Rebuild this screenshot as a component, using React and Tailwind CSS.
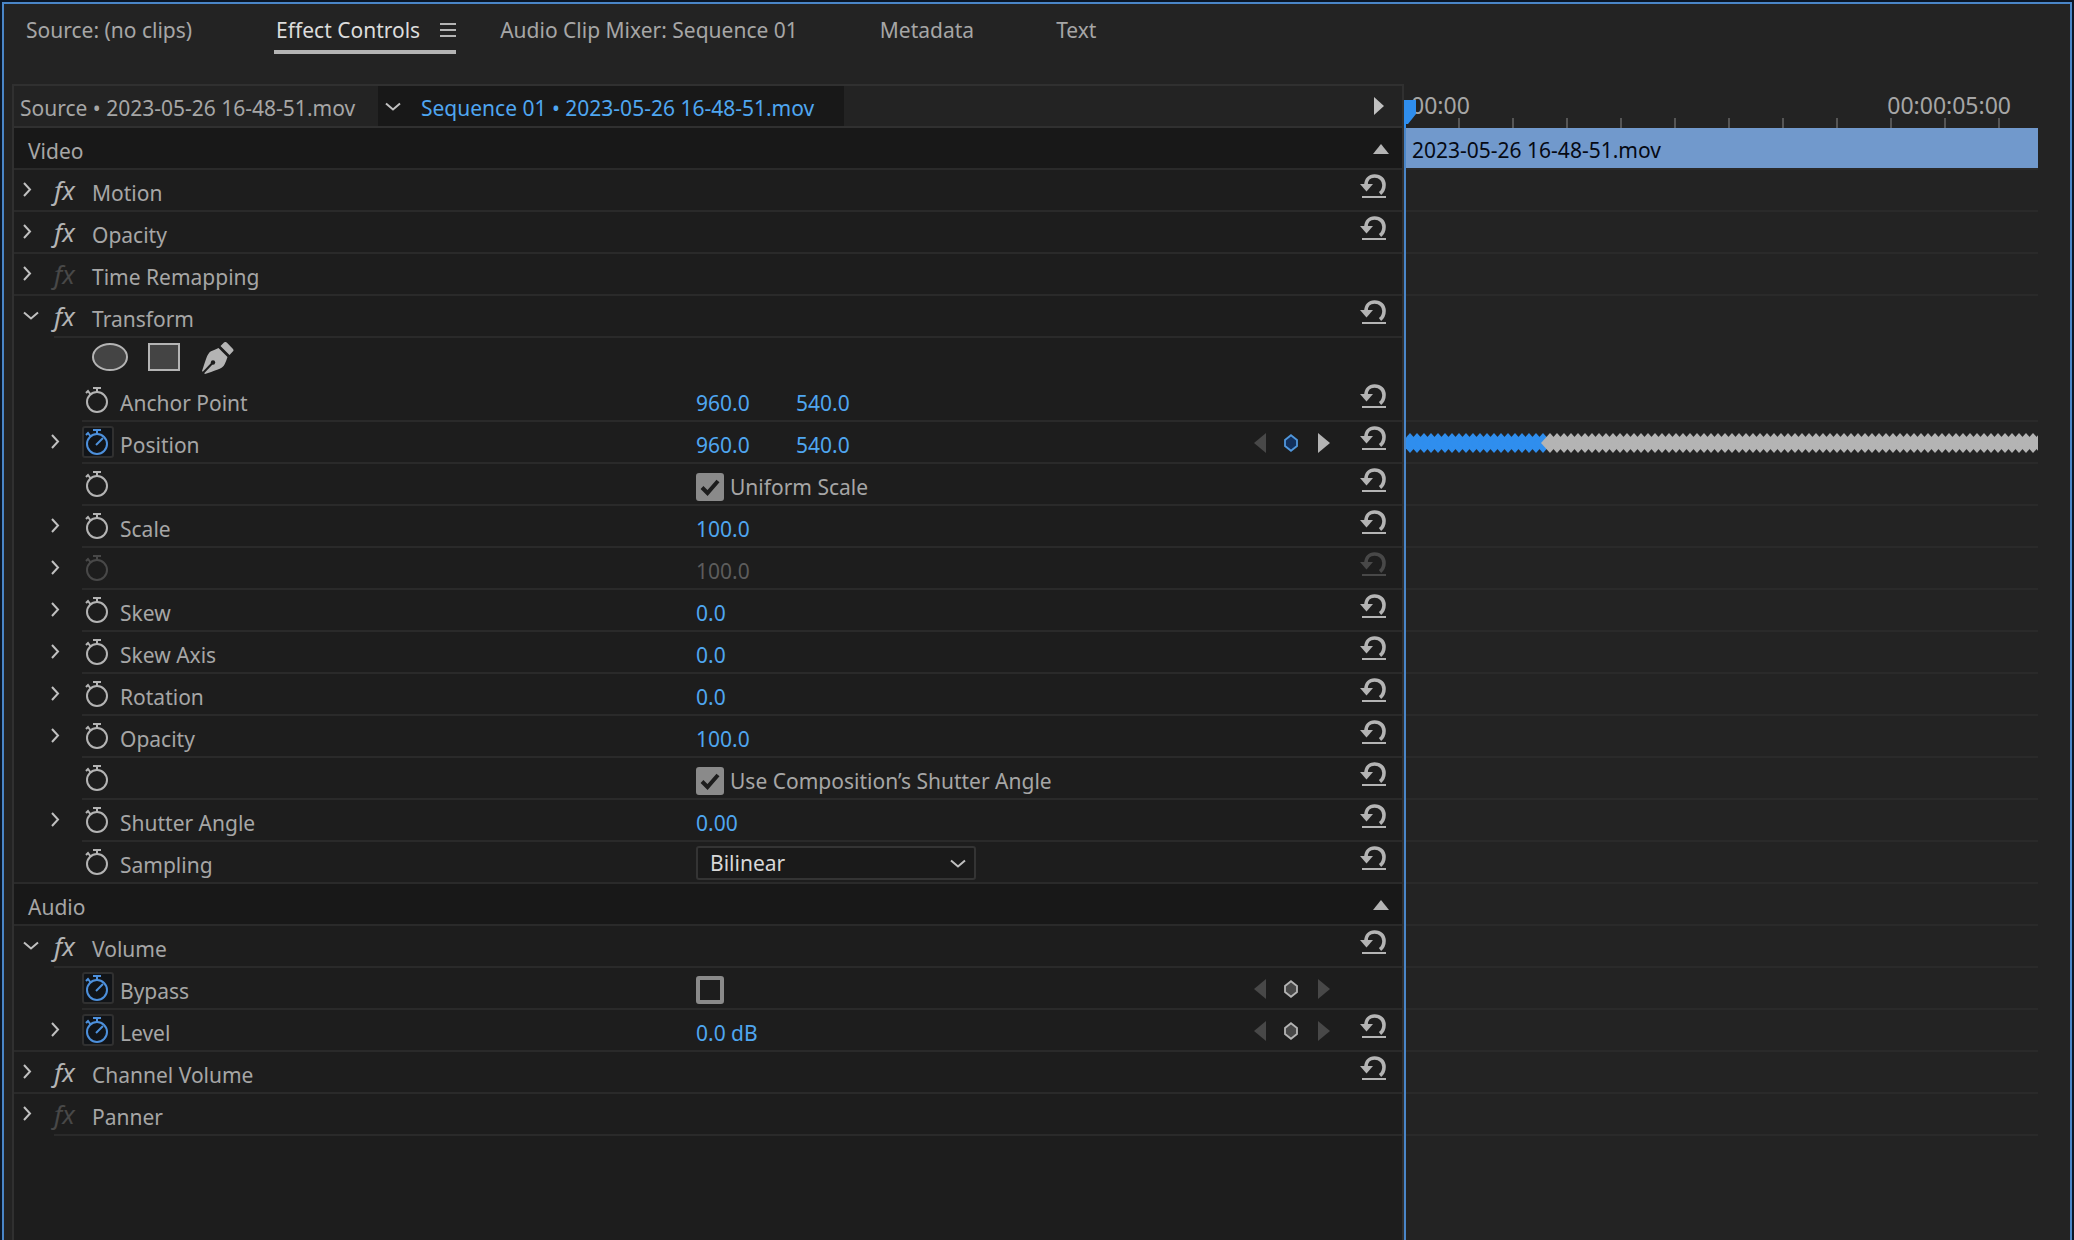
import React, { useState } from 'react';

const rows = [
  { id: 'video', kind: 'section', label: 'Video' },
  { id: 'motion', kind: 'effect', label: 'Motion', reset: true },
  { id: 'opacity-fx', kind: 'effect', label: 'Opacity', reset: true },
  { id: 'time', kind: 'effect', label: 'Time Remapping', dim: true },
  { id: 'transform', kind: 'effect', label: 'Transform', open: true, inset: true, reset: true, noTrackLine: true },
  { id: 'masks', kind: 'masks', noTrackLine: true },
  { id: 'anchor', kind: 'prop', label: 'Anchor Point', values: ['960.0', '540.0'], reset: true },
  { id: 'position', kind: 'prop', label: 'Position', arrow: true, values: ['960.0', '540.0'], animated: true, nav: 'active', reset: true, keyframes: true },
  { id: 'uniform', kind: 'prop', check: 'Uniform Scale', checked: true, reset: true },
  { id: 'scale', kind: 'prop', label: 'Scale', arrow: true, values: ['100.0'], reset: true },
  { id: 'scale-w', kind: 'prop', arrow: true, values: ['100.0'], disabled: true, reset: true },
  { id: 'skew', kind: 'prop', label: 'Skew', arrow: true, values: ['0.0'], reset: true },
  { id: 'skew-axis', kind: 'prop', label: 'Skew Axis', arrow: true, values: ['0.0'], reset: true },
  { id: 'rotation', kind: 'prop', label: 'Rotation', arrow: true, values: ['0.0'], reset: true },
  { id: 'opacity', kind: 'prop', label: 'Opacity', arrow: true, values: ['100.0'], reset: true },
  { id: 'use-comp', kind: 'prop', check: 'Use Composition’s Shutter Angle', checked: true, reset: true },
  { id: 'shutter', kind: 'prop', label: 'Shutter Angle', arrow: true, values: ['0.00'], reset: true },
  { id: 'sampling', kind: 'prop', label: 'Sampling', select: true, reset: true, last: true },
  { id: 'audio', kind: 'section', label: 'Audio' },
  { id: 'volume', kind: 'effect', label: 'Volume', open: true, inset: true, reset: true },
  { id: 'bypass', kind: 'prop', label: 'Bypass', check: '', checked: false, animated: true, nav: 'idle' },
  { id: 'level', kind: 'prop', label: 'Level', arrow: true, values: ['0.0 dB'], animated: true, nav: 'idle', reset: true, last: true },
  { id: 'channel', kind: 'effect', label: 'Channel Volume', reset: true },
  { id: 'panner', kind: 'effect', label: 'Panner', dim: true, inset: true },
];

function ChevronRight() {
  return (
    <svg width="9" height="15" viewBox="0 0 9 15" fill="none" stroke="#c0c0c0" strokeWidth="2">
      <path d="M1 1 L7 7.5 L1 14" />
    </svg>
  );
}

function ChevronDown() {
  return (
    <svg width="16" height="9" viewBox="0 0 16 9" fill="none" stroke="#c0c0c0" strokeWidth="2">
      <path d="M1 1.5 L8 7.5 L15 1.5" />
    </svg>
  );
}

function Stopwatch({ on, disabled }) {
  const color = on ? '#4d90dc' : disabled ? '#484848' : '#b4b4b4';
  return (
    <svg width="24" height="27" viewBox="0 0 24 27" fill="none" stroke={color} strokeWidth="2">
      <circle cx="12" cy="15" r="10" />
      <path d="M8 1 H16 M12 1 V5" />
      <path d="M1 6 L3 4 L6 8" />
      {on && <path d="M11 16 L18 9" />}
    </svg>
  );
}

function ResetIcon({ disabled }) {
  const color = disabled ? '#484848' : '#b4b4b4';
  return (
    <svg width="26" height="24" viewBox="0 0 26 24">
      <path d="M6 11 C6 5.500 9.500 2 14.500 2 C20.500 2 24 6 24 11 C24 15 22.500 17.500 20 19.500" fill="none" stroke={color} strokeWidth="3.600" />
      <path d="M0 10 H13 L6.500 17.500 Z" fill={color} />
      <path d="M2 22 H26 V24 H2 Z" fill={color} />
    </svg>
  );
}

function ResetButton({ name, disabled }) {
  return (
    <button aria-label={'Reset ' + name} disabled={disabled} className="mt-1 h-6 w-[26px]">
      <ResetIcon disabled={disabled} />
    </button>
  );
}

function KeyframeNav({ mode }) {
  const active = mode === 'active';
  return (
    <div className="mt-[10px] flex h-[22px] items-center gap-[18px]">
      <button aria-label="Previous keyframe" disabled>
        <svg width="12" height="20" viewBox="0 0 12 20">
          <path d="M12 0 V20 L0 10 Z" fill="#484848" />
        </svg>
      </button>
      <button aria-label="Toggle keyframe">
        <svg width="14" height="18" viewBox="0 0 14 18">
          <path d="M7 1.200 L13 6 V12 L7 16.800 L1 12 V6 Z" fill={active ? '#12305c' : '#484848'} stroke={active ? '#5097dd' : '#b4b4b4'} strokeWidth="1.800" />
        </svg>
      </button>
      <button aria-label="Next keyframe" disabled={!active} className="ml-0.5">
        <svg width="12" height="20" viewBox="0 0 12 20">
          <path d="M0 0 V20 L12 10 Z" fill={active ? '#b4b4b4' : '#484848'} />
        </svg>
      </button>
    </div>
  );
}

function CheckField({ id, label, initial }) {
  const [checked, setChecked] = useState(initial);
  return (
    <div className="mt-2 flex items-center gap-[6px]">
      <span className="grid size-7 shrink-0 place-items-center">
        <input
          id={id}
          type="checkbox"
          aria-label={label || 'Bypass'}
          checked={checked}
          onChange={(e) => setChecked(e.target.checked)}
          className="col-start-1 row-start-1 size-7 appearance-none rounded-[3px] border-4 border-[#8a8a8a] checked:bg-[#8a8a8a]"
        />
        {checked && (
          <svg width="20" height="17" viewBox="0 0 20 17" fill="none" stroke="#1d1d1d" strokeWidth="4" className="pointer-events-none col-start-1 row-start-1">
            <path d="M2 8.500 L7.500 14 L18 2" />
          </svg>
        )}
      </span>
      {label && <label htmlFor={id}>{label}</label>}
    </div>
  );
}

function SectionRow({ row }) {
  return (
    <div className="flex h-[42px] items-start justify-between border-b-2 border-[#2a2a2a] bg-[#181818] pr-[13px] pl-[14px]">
      <h2 className="pt-2">{row.label}</h2>
      <button aria-label={'Collapse ' + row.label} className="mt-4">
        <svg width="16" height="10" viewBox="0 0 16 10">
          <path d="M8 0 L16 10 H0 Z" fill="#b4b4b4" />
        </svg>
      </button>
    </div>
  );
}

function EffectRow({ row }) {
  return (
    <div className={'flex h-[42px]' + (row.inset ? '' : ' border-b-2 border-[#2a2a2a]')}>
      <button aria-label={'Toggle ' + row.label} className="mt-[7px] flex h-6 w-10 items-center pl-[9px]">
        {row.open ? <ChevronDown /> : <ChevronRight />}
      </button>
      <div className={'flex flex-1 items-start pr-4' + (row.inset ? ' border-b-2 border-[#2a2a2a]' : '')}>
        <button aria-label={row.label + ' effect on or off'} className={'mt-1 w-[38px] text-left text-[26px] leading-8 italic ' + (row.dim ? 'text-[#484848]' : 'text-[#b4b4b4]')}>
          fx
        </button>
        <span className="flex-1 pt-2">{row.label}</span>
        {row.reset && <ResetButton name={row.label} />}
      </div>
    </div>
  );
}

function MaskRow() {
  return (
    <div className="flex h-[42px] items-start gap-5 pt-1 pl-[78px]">
      <button aria-label="Create ellipse mask">
        <svg width="36" height="30" viewBox="0 0 36 30">
          <ellipse cx="18" cy="15" rx="17" ry="13" fill="#444" stroke="#b4b4b4" strokeWidth="2" />
        </svg>
      </button>
      <button aria-label="Create rectangle mask">
        <svg width="32" height="30" viewBox="0 0 32 30">
          <rect x="1" y="2" width="30" height="26" fill="#444" stroke="#b4b4b4" strokeWidth="2" />
        </svg>
      </button>
      <button aria-label="Free draw bezier">
        <svg width="36" height="32" viewBox="0 0 36 32">
          <g fill="#b4b4b4">
            <path d="M24 0.500 C25 -0.300 26 -0.200 27 0.800 L33 7 C33.800 8 33.600 9 32.800 9.600 L29.500 13 L20.500 4 Z" />
            <path d="M18.500 6 L27.500 15 C26.500 18 25.500 20.500 24.500 22.500 C23 27 13 29 5 32 L2 29 C5 21 7 11 11 9.300 C13.500 8.300 16 7 18.500 6 Z" />
          </g>
          <path d="M3 31 L12 21.500" stroke="#1d1d1d" strokeWidth="2" />
          <circle cx="13" cy="20.500" r="2.200" fill="#1d1d1d" />
        </svg>
      </button>
    </div>
  );
}

function SamplingSelect() {
  return (
    <div className="relative mt-1">
      <select aria-label="Sampling" defaultValue="Bilinear" className="h-[34px] w-[280px] appearance-none rounded-[3px] border-2 border-[#343434] bg-[#1a1a1a] pr-10 pl-3 leading-7 text-[#d8d8d8]">
        <option>Bilinear</option>
        <option>Bicubic</option>
      </select>
      <span className="pointer-events-none absolute top-[13px] right-[10px]">
        <ChevronDown />
      </span>
    </div>
  );
}

function PropRow({ row }) {
  const line = 'border-b-2 border-[#2a2a2a]';
  return (
    <div className={'flex h-[42px] ' + (row.last ? line : '')}>
      <div className="w-[68px] shrink-0 pt-[7px] pl-[37px]">
        {row.arrow && (
          <button aria-label={'Expand ' + (row.label || 'Scale Width')} className="flex h-6 items-center">
            <ChevronRight />
          </button>
        )}
      </div>
      <div className={'grid flex-1 grid-cols-[614fr_690fr] pr-4 ' + (row.last ? '' : line)}>
        <div className="flex items-start">
          <button
            aria-label={'Toggle animation for ' + (row.label || row.check || 'Scale Width')}
            disabled={row.disabled}
            className={'mt-1 mr-[6px] grid h-8 w-8 place-items-center rounded-[3px] border-2 pr-0.5 ' + (row.animated ? 'border-[#303030] bg-[#111418]' : 'border-transparent')}
          >
            <Stopwatch on={row.animated} disabled={row.disabled} />
          </button>
          {row.label && <span className="pt-2">{row.label}</span>}
        </div>
        <div className="flex items-start justify-between">
          {row.values && (
            <div className="flex pt-2">
              {row.values.map((v, i) => (
                <button key={i} disabled={row.disabled} className={'w-[100px] text-left ' + (row.disabled ? 'text-[#5c5c5c]' : 'text-[#4fa6f0]')}>
                  {v}
                </button>
              ))}
            </div>
          )}
          {row.check !== undefined && <CheckField id={row.id} label={row.check} initial={row.checked} />}
          {row.select && <SamplingSelect />}
          <div className="flex items-start gap-[30px]">
            {row.nav && <KeyframeNav mode={row.nav} />}
            {row.reset ? <ResetButton name={row.label || row.check || 'Scale Width'} disabled={row.disabled} /> : <span className="w-[26px]" />}
          </div>
        </div>
      </div>
    </div>
  );
}

function Row({ row }) {
  if (row.kind === 'section') return <SectionRow row={row} />;
  if (row.kind === 'effect') return <EffectRow row={row} />;
  if (row.kind === 'masks') return <MaskRow />;
  return <PropRow row={row} />;
}

const keyframes = Array.from({ length: 96 }, (_, i) => i * 7);

function Keyframes() {
  const diamond = (x) => `M${x - 9} 10 L${x} 0 L${x + 9} 10 L${x} 20 Z`;
  return (
    <svg width="100%" height="20" className="block">
      {keyframes.map((x, i) => (
        <path key={x} d={diamond(x + 4)} fill={i < 20 ? '#2f8eee' : '#b4b4b4'} />
      ))}
    </svg>
  );
}

function Timeline() {
  return (
    <div className="flex flex-col pr-8">
      <div className="relative h-11">
        <div className="flex h-full items-start justify-between pt-[6px] pr-[27px] pl-[7px] text-[23px] leading-[30px]">
          <span>00:00</span>
          <span>00:00:05:00</span>
        </div>
        <svg width="100%" height="10" className="absolute bottom-0 left-0">
          {Array.from({ length: 11 }, (_, i) => (
            <rect key={i} x={54 + i * 54} width="2" height="10" fill="#555" />
          ))}
        </svg>
        {/* Playhead */}
        <svg width="12" height="28" viewBox="0 0 12 28" className="absolute bottom-0 left-0">
          <path d="M0 0 H12 V14 L4 24 H2 V28 H0 Z" fill="#2f8eee" />
        </svg>
      </div>
      <div className="flex-1 border-l-2 border-[#4a86c8]">
        <div className="h-10 bg-[#7199cc] pl-[6px] leading-[44px] text-[#060a14]">2023-05-26 16-48-51.mov</div>
        <div className="h-0.5 bg-[#2a2a2a]" />
        {rows.slice(1).map((row) => (
          <div key={row.id} className={'h-[42px] ' + (row.noTrackLine ? '' : 'border-b-2 border-[#2a2a2a]')}>
            {row.keyframes && (
              <div className="pt-[11px]">
                <Keyframes />
              </div>
            )}
          </div>
        ))}
      </div>
    </div>
  );
}

export default function App() {
  return (
    <div className="flex min-h-screen flex-col bg-[#0a1626] pt-0.5 pr-0.5 pl-0.5 font-['Noto_Sans',sans-serif] text-[21px] leading-[30px] text-[#a6a6a6]">
      <div className="flex flex-1 flex-col border-x-2 border-t-2 border-[#4a86c8] bg-[#232323]">
        {/* Panel tabs */}
        <nav className="flex h-20 items-start pt-[10px] pl-[22px] leading-8 whitespace-nowrap">
          <button className="mr-[82px]">Source: (no clips)</button>
          <div className="mr-11 flex items-center gap-5 border-b-4 border-[#b4b4b4] pb-1 pl-0.5">
            <button className="text-[#dcdcdc]">Effect Controls</button>
            <button aria-label="Panel menu">
              <svg width="16" height="14" viewBox="0 0 16 14" fill="#b4b4b4">
                <path d="M0 0 H16 V2 H0 Z M0 6 H16 V8 H0 Z M0 12 H16 V14 H0 Z" />
              </svg>
            </button>
          </div>
          <button className="mr-[82px]">Audio Clip Mixer: Sequence 01</button>
          <button className="mr-[82px]">Metadata</button>
          <button>Text</button>
        </nav>

        <div className="grid flex-1 grid-cols-[1392fr_666fr] pl-2">
          <div className="border-t-2 border-r-2 border-l-2 border-[#303030] bg-[#1d1d1d]">
            {/* Clip header */}
            <div className="flex h-[42px] items-center border-b-2 border-[#303030] bg-[#232323] whitespace-nowrap">
              <button className="h-full w-[364px] pl-[6px] text-left leading-[44px]">Source • 2023-05-26 16-48-51.mov</button>
              <div className="flex h-full items-center bg-[#181818] pr-[30px] pl-[7px]">
                <button aria-label="Choose clip" className="mr-5">
                  <ChevronDown />
                </button>
                <button className="h-full leading-[44px] text-[#4fa6f0]">Sequence 01 • 2023-05-26 16-48-51.mov</button>
              </div>
              <button aria-label="Hide timeline view" className="mr-[18px] ml-auto">
                <svg width="10" height="18" viewBox="0 0 10 18">
                  <path d="M0 0 L10 9 L0 18 Z" fill="#c0c0c0" />
                </svg>
              </button>
            </div>
            {rows.map((row) => (
              <Row key={row.id} row={row} />
            ))}
          </div>
          <Timeline />
        </div>
      </div>
    </div>
  );
}
